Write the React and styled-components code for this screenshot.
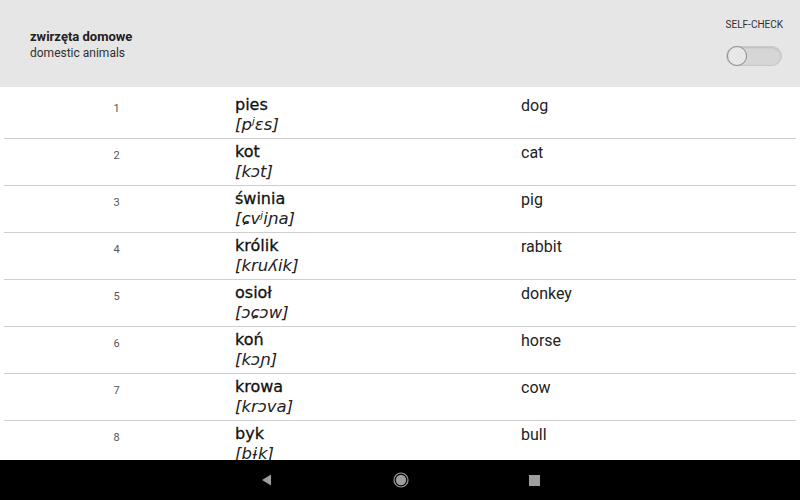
import styled, { createGlobalStyle } from "styled-components";

const words = [
    { pl: "pies", ipa: "[pʲɛs]", en: "dog" },
    { pl: "kot", ipa: "[kɔt]", en: "cat" },
    { pl: "świnia", ipa: "[ɕvʲiɲa]", en: "pig" },
    { pl: "królik", ipa: "[kruʎik]", en: "rabbit" },
    { pl: "osioł", ipa: "[ɔɕɔw]", en: "donkey" },
    { pl: "koń", ipa: "[kɔɲ]", en: "horse" },
    { pl: "krowa", ipa: "[krɔva]", en: "cow" },
    { pl: "byk", ipa: "[bɨk]", en: "bull" },
];

const GlobalStyle = createGlobalStyle`
    html, body {
        margin: 0;
        padding: 0;
        background: #ffffff;
    }
    * { box-sizing: border-box; }
`;

export default function App() {
    return (
        <>
            <GlobalStyle />
            <StScreen>
                <StHeader>
                    <StTitles>
                        <StTitle>zwirzęta domowe</StTitle>
                        <StSubtitle>domestic animals</StSubtitle>
                    </StTitles>
                    <StCheck>
                        <StCheckLabel>SELF-CHECK</StCheckLabel>
                        <StSwitch>
                            <StThumb />
                        </StSwitch>
                    </StCheck>
                </StHeader>

                <StList>
                    {words.map((w, i) => (
                        <StRow key={w.pl}>
                            <StNum>{i + 1}</StNum>
                            <StWord>
                                <StPolish>{w.pl}</StPolish>
                                <StIpa>{w.ipa}</StIpa>
                            </StWord>
                            <StEnglish>{w.en}</StEnglish>
                        </StRow>
                    ))}
                </StList>

                <StNavBar>
                    <svg width="12" height="12" viewBox="0 0 12 12">
                        <polygon points="10,0.5 10,11.5 1,6" fill="#9e9e9e" />
                    </svg>
                    <svg width="16" height="16" viewBox="0 0 16 16">
                        <circle cx="8" cy="8" r="7" fill="none" stroke="#9e9e9e" strokeWidth="1.2" />
                        <circle cx="8" cy="8" r="5.2" fill="#9e9e9e" />
                    </svg>
                    <svg width="11" height="11" viewBox="0 0 11 11">
                        <rect x="0" y="0" width="11" height="11" fill="#9e9e9e" />
                    </svg>
                </StNavBar>
            </StScreen>
        </>
    );
}

const StScreen = styled.div`
    position: relative;
    width: 800px;
    height: 500px;
    display: flex;
    flex-direction: column;
    overflow: hidden;
    background: #ffffff;
`;

const StHeader = styled.header`
    height: 87px;
    flex: none;
    background-color: #e6e6e6;
    display: flex;
    justify-content: space-between;
    align-items: flex-start;
    padding: 0 18px 0 30px;
    font-family: Roboto, "Liberation Sans", sans-serif;
`;

const StTitles = styled.div`
    padding-top: 28px;
`;

const StTitle = styled.div`
    font-size: 13px;
    font-weight: bold;
    color: #212121;
    line-height: 17px;
`;

const StSubtitle = styled.div`
    font-size: 12px;
    color: #303030;
    line-height: 16px;
`;

const StCheck = styled.div`
    display: flex;
    flex-direction: column;
    align-items: flex-end;
    padding-top: 19px;
`;

const StCheckLabel = styled.div`
    font-size: 10px;
    color: #303030;
    line-height: 12px;
    margin-right: -1px;
`;

const StSwitch = styled.div`
    position: relative;
    margin-top: 15px;
    width: 56px;
    height: 20px;
    border-radius: 10px;
    background: #d6d6d6;
    border: 1px solid #c8c8c8;
    box-shadow: inset 0 1px 2px rgba(0, 0, 0, 0.12);
`;

const StThumb = styled.div`
    position: absolute;
    left: 0px;
    top: -1px;
    width: 20px;
    height: 20px;
    border-radius: 50%;
    background: #e8e8e8;
    border: 1.5px solid #8a8a8a;
`;

const StList = styled.div`
    flex: 1;
    overflow: hidden;
    padding-top: 5px;
`;

const StRow = styled.div`
    height: 47px;
    display: grid;
    grid-template-columns: 235px 286px 1fr;
    align-items: start;
    margin: 0 4px;
    border-bottom: 1.5px solid #cfcfcf;
`;

const StNum = styled.div`
    font-family: Roboto, "Liberation Sans", sans-serif;
    font-size: 11px;
    color: #555555;
    text-align: center;
    padding-top: 10px;
    padding-right: 10px;
`;

const StWord = styled.div`
    display: flex;
    flex-direction: column;
    padding-top: 3px;
    margin-left: -4px;
`;

const StPolish = styled.div`
    font-family: "DejaVu Sans", sans-serif;
    font-size: 16px;
    color: #111111;
    line-height: 20px;
    -webkit-text-stroke: 0.3px #111111;
`;

const StIpa = styled.div`
    font-family: "DejaVu Sans", sans-serif;
    font-style: italic;
    font-size: 16.5px;
    color: #222222;
    line-height: 20px;
`;

const StEnglish = styled.div`
    font-family: Roboto, "Liberation Sans", sans-serif;
    font-size: 16px;
    color: #222222;
    padding-top: 4px;
    margin-left: -4px;
`;

const StNavBar = styled.nav`
    height: 40px;
    flex: none;
    background: #000000;
    display: flex;
    align-items: center;
    justify-content: center;
    gap: 120px;
`;
